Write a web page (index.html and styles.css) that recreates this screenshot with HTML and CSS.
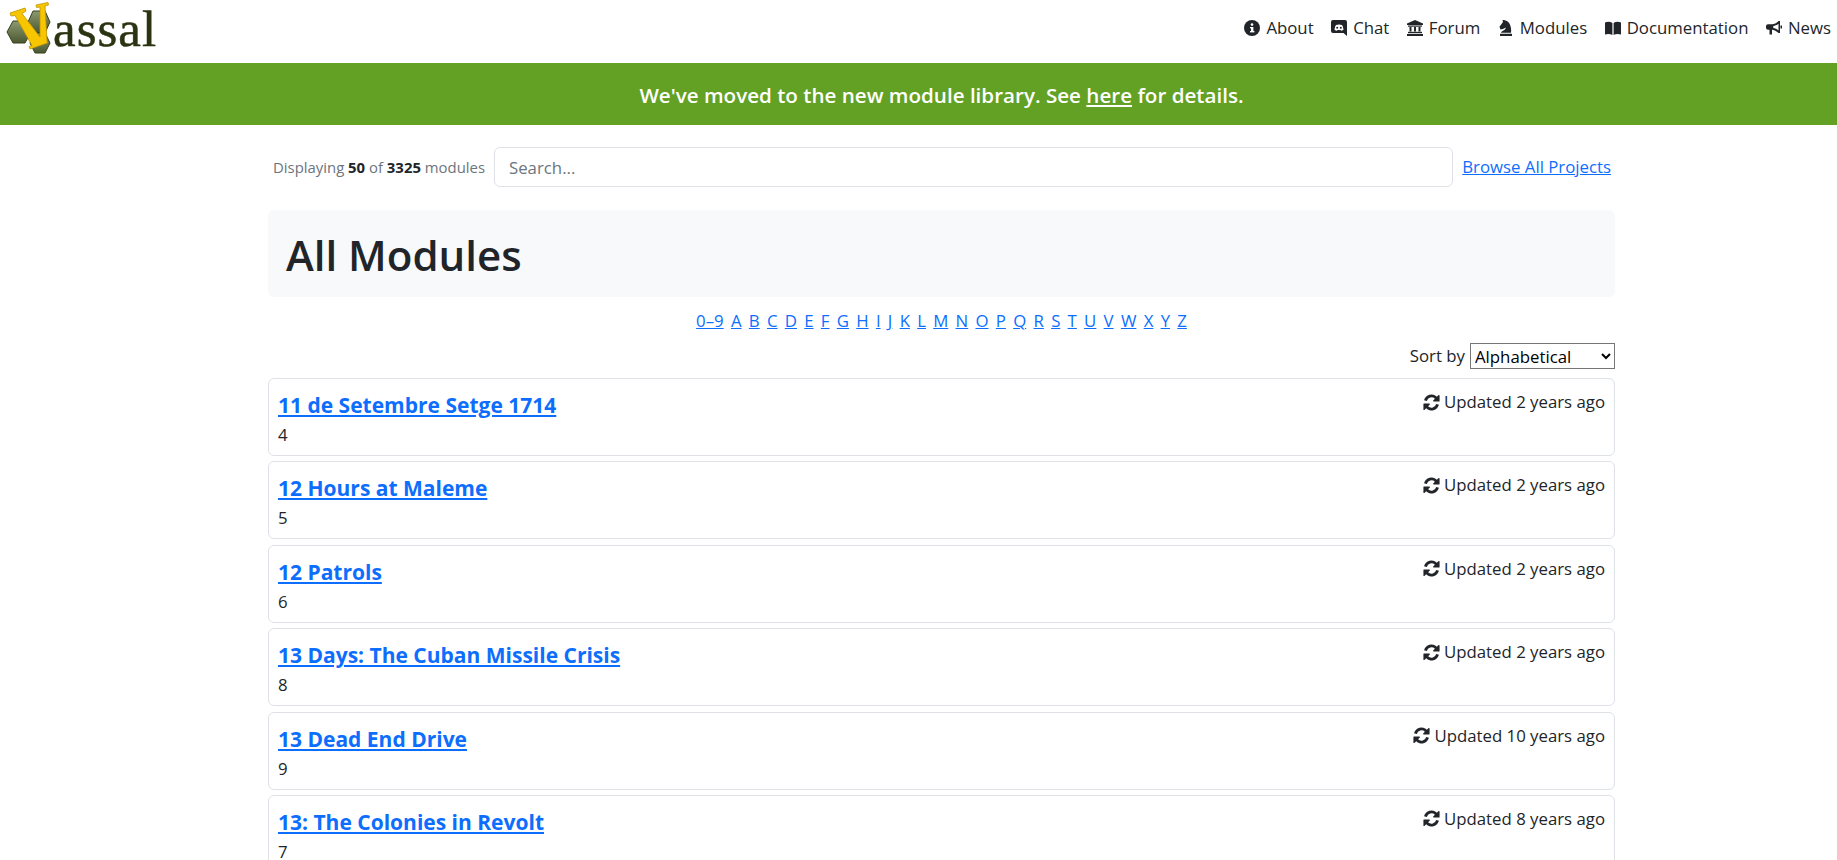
FILE: index.html
```html
<!DOCTYPE html>
<html lang="en">
<head>
    <meta charset="UTF-8">
    <title>All Modules</title>
    <link rel="stylesheet" href="styles.css">
</head>
<body>
<header class="topbar">
    <a class="logo" href="#">
        <svg class="logo-mark" viewBox="0 0 60 56" width="60" height="56">
            <defs>
                <linearGradient id="hex" x1="0" y1="0" x2="0" y2="1">
                    <stop offset="0" stop-color="#8d9a70"/>
                    <stop offset="1" stop-color="#4b5731"/>
                </linearGradient>
            </defs>
            <polygon points="7,32 13,21 25,21 31,32 25,43 13,43" fill="url(#hex)" stroke="#38421f"/>
            <polygon points="28,22 33,11 45,11 50,22 45,33 33,33" fill="url(#hex)" stroke="#38421f"/>
            <polygon points="30,43 35,33 45,33 50,43 45,53 35,53" fill="url(#hex)" stroke="#38421f"/>
            <polygon points="10,13 25,8 26,11 22,13.500 40,37 40,7 36.500,7.500 36,5 48,2.500 48.500,5 45,6 47,41 47.500,43 30,49 29,46.500 32,45.500 15,15.500 11,16" fill="#f7c600" stroke="#c09500" stroke-width="0.8"/>
        </svg>
        <span class="logo-text">assal</span>
    </a>
    <nav class="nav">
        <a href="#"><svg viewBox="0 0 16 16"><circle cx="8" cy="8" r="8"/><rect x="7" y="7" width="2.400" height="5" fill="#fff"/><rect x="6" y="11" width="4.400" height="1.400" fill="#fff"/><rect x="6" y="7" width="3" height="1.300" fill="#fff"/><circle cx="8" cy="4.600" r="1.300" fill="#fff"/></svg>About</a>
        <a href="#"><svg viewBox="0 0 16 16"><path d="M2 0h12a2 2 0 0 1 2 2v14l-3.500-3H2a2 2 0 0 1-2-2V2a2 2 0 0 1 2-2z"/><path d="M3.500 9.800c.2-2.200.8-4 1.600-4.800 1.900-.7 3.900-.7 5.800 0 .8.800 1.400 2.600 1.600 4.800-.9.700-1.700 1-2.400 1l-.6-.9H6.500l-.6.900c-.7 0-1.500-.3-2.400-1z" fill="#fff"/><circle cx="6.200" cy="7.800" r="1"/><circle cx="9.800" cy="7.800" r="1"/></svg>Chat</a>
        <a href="#"><svg viewBox="0 0 16 16"><path d="M8 0l8 3.500V5H0V3.500z"/><rect x="1" y="5.500" width="14" height="1.200"/><rect x="2.500" y="7" width="2" height="4.500"/><rect x="7" y="7" width="2" height="4.500"/><rect x="11.500" y="7" width="2" height="4.500"/><rect x="1" y="11.800" width="14" height="1.400"/><rect x="0" y="14" width="16" height="2"/></svg>Forum</a>
        <a href="#"><svg viewBox="0 0 16 16"><path d="M2 16h12v-2.200H2zM3 12.800h10c.6-3.200-.2-8.300-2.800-10.800C8.500.5 6.500 0 4.500 0l.5 2L1.500 6.800l1 2.700 2.500-.5 2.800-1.600c-.2 2.200-2.500 3.100-3.300 3.500C3.700 11.400 3 12 3 12.800z"/></svg>Modules</a>
        <a href="#"><svg viewBox="0 0 16 16"><path d="M0 2.500C2.500 1.500 5.500 1.700 7.400 3v12C5.500 13.800 2.500 13.600 0 14.500zM16 2.500c-2.500-1-5.500-.8-7.400.5v12c1.900-1.200 4.900-1.400 7.400-.5z"/></svg>Documentation</a>
        <a href="#"><svg viewBox="0 0 16 16"><path d="M14 1v12h-1.500C10.500 11 8 10 6 9.800V14.500H3.500V9.800H2a2 2 0 0 1-2-2V6.200a2 2 0 0 1 2-2h4c2 0 4.500-1 6.500-3.200zM12.500 3.700C11 5 8.800 5.900 7.300 6v2.100c1.500.1 3.700 1 5.200 2.300z" fill-rule="evenodd"/><rect x="14.500" y="5.500" width="1.500" height="3"/></svg>News</a>
    </nav>
</header>

<div class="banner">We've moved to the new module library. See <a href="#">here</a> for details.</div>

<main class="container">
    <div class="search-row">
        <span class="count">Displaying <b>50</b> of <b>3325</b> modules</span>
        <input class="search" type="text" placeholder="Search...">
        <a class="browse" href="#">Browse All Projects</a>
    </div>

    <div class="jumbo"><h1>All Modules</h1></div>

    <div class="letters">
        <a href="#">0–9</a> <a href="#">A</a> <a href="#">B</a> <a href="#">C</a> <a href="#">D</a> <a href="#">E</a> <a href="#">F</a> <a href="#">G</a> <a href="#">H</a> <a href="#">I</a> <a href="#">J</a> <a href="#">K</a> <a href="#">L</a> <a href="#">M</a> <a href="#">N</a> <a href="#">O</a> <a href="#">P</a> <a href="#">Q</a> <a href="#">R</a> <a href="#">S</a> <a href="#">T</a> <a href="#">U</a> <a href="#">V</a> <a href="#">W</a> <a href="#">X</a> <a href="#">Y</a> <a href="#">Z</a>
    </div>

    <div class="sort">
        <label for="sort-by">Sort by</label>
        <select id="sort-by"><option>Alphabetical</option></select>
    </div>

    <svg width="0" height="0" class="defs"><symbol id="sync" viewBox="0 0 16 16"><path d="M13 2.600 14.700 1c.4-.3.900 0 .9.400V6.500c0 .3-.2.500-.5.500H10c-.5 0-.7-.6-.4-.9l1.600-1.600A4.500 4.500 0 0 0 3.600 6.600L1 5.900A7.200 7.200 0 0 1 13 2.600zM.9 9h5.100c.5 0 .7.600.4.900l-1.600 1.600a4.500 4.500 0 0 0 7.600-2.100l2.600.7A7.200 7.200 0 0 1 3 13.400L1.300 15c-.4.300-.9 0-.9-.4V9.500c0-.3.200-.5.500-.5z"/></symbol></svg>

    <div class="card">
        <div><a class="title" href="#">11 de Setembre Setge 1714</a><div class="num">4</div></div>
        <span class="updated"><svg><use href="#sync"/></svg>Updated 2 years ago</span>
    </div>
    <div class="card">
        <div><a class="title" href="#">12 Hours at Maleme</a><div class="num">5</div></div>
        <span class="updated"><svg><use href="#sync"/></svg>Updated 2 years ago</span>
    </div>
    <div class="card">
        <div><a class="title" href="#">12 Patrols</a><div class="num">6</div></div>
        <span class="updated"><svg><use href="#sync"/></svg>Updated 2 years ago</span>
    </div>
    <div class="card">
        <div><a class="title" href="#">13 Days: The Cuban Missile Crisis</a><div class="num">8</div></div>
        <span class="updated"><svg><use href="#sync"/></svg>Updated 2 years ago</span>
    </div>
    <div class="card">
        <div><a class="title" href="#">13 Dead End Drive</a><div class="num">9</div></div>
        <span class="updated"><svg><use href="#sync"/></svg>Updated 10 years ago</span>
    </div>
    <div class="card">
        <div><a class="title" href="#">13: The Colonies in Revolt</a><div class="num">7</div></div>
        <span class="updated"><svg><use href="#sync"/></svg>Updated 8 years ago</span>
    </div>
</main>
</body>
</html>
```

FILE: styles.css
```css
html, body {
    height: 860px;
    overflow: hidden;
}
body {
    margin: 0;
    font-family: "Open Sans", "Noto Sans", sans-serif;
    font-size: 16.800px;
    line-height: 24px;
    color: #212529;
    background-color: #fff;
}
a {
    color: #0d6efd;
}
.topbar {
    height: 63px;
    display: flex;
    justify-content: space-between;
    align-items: flex-start;
}
.logo {
    display: flex;
    align-items: flex-start;
    text-decoration: none;
}
.logo-mark {
    display: block;
}
.logo-text {
    font-family: "Liberation Serif", serif;
    font-size: 51px;
    line-height: 58px;
    color: #2b3412;
    -webkit-text-stroke: 0.5px #2b3412;
    margin-left: -7px;
    letter-spacing: 1px;
}
.nav {
    display: flex;
    gap: 17.500px;
    margin-right: 6px;
    padding-top: 16px;
}
.nav a {
    display: flex;
    align-items: center;
    gap: 6px;
    color: #212529;
    text-decoration: none;
}
.nav svg {
    width: 16px;
    height: 16px;
    fill: #212529;
}
.banner {
    height: 62px;
    line-height: 64px;
    padding-left: 46px;
    background-color: #62a123;
    color: #fff;
    text-align: center;
    font-size: 20.600px;
    font-weight: 600;
}
.banner a {
    color: #fff;
}
.container {
    width: 1347px;
    margin-left: 268px;
}
.search-row {
    display: flex;
    align-items: center;
    gap: 9px;
    margin-top: 22px;
    padding-left: 5px;
}
.count {
    font-size: 14.900px;
    color: #6c757d;
    white-space: nowrap;
}
.count b {
    color: #212529;
}
.search {
    flex: 1;
    height: 40px;
    box-sizing: border-box;
    border: 1px solid #dee2e6;
    border-radius: 6px;
    padding: 0 14px;
    font: inherit;
}
.search::placeholder {
    color: #6c757d;
}
.browse {
    margin-right: 4px;
    white-space: nowrap;
}
.jumbo {
    margin-top: 23px;
    height: 87px;
    box-sizing: border-box;
    padding: 2px 18px 0;
    display: flex;
    align-items: center;
    background-color: #f8f9fa;
    border-radius: 6px;
}
.jumbo h1 {
    margin: 0;
    font-size: 42px;
    line-height: 48px;
    font-weight: 600;
}
.letters {
    text-align: center;
    margin-top: 12px;
    word-spacing: 2.900px;
}
.sort {
    display: flex;
    justify-content: flex-end;
    align-items: center;
    gap: 5px;
    margin-top: 10px;
    height: 26px;
}
.sort select {
    width: 145px;
    height: 26px;
    font: inherit;
    background-color: #fff;
}
.defs {
    position: absolute;
}
.card {
    display: flex;
    justify-content: space-between;
    height: 78px;
    box-sizing: border-box;
    margin-top: 5.400px;
    padding: 11px 9px 0;
    border: 1px solid #dee2e6;
    border-radius: 6px;
}
.sort + .defs + .card {
    margin-top: 9px;
}
.title {
    font-size: 21px;
    font-weight: 700;
    line-height: 30px;
}
.num {
    margin-top: 3px;
}
.updated {
    display: flex;
    align-items: center;
    height: 24px;
    gap: 4px;
}
.updated svg {
    width: 17px;
    height: 17px;
    fill: #212529;
}
```
